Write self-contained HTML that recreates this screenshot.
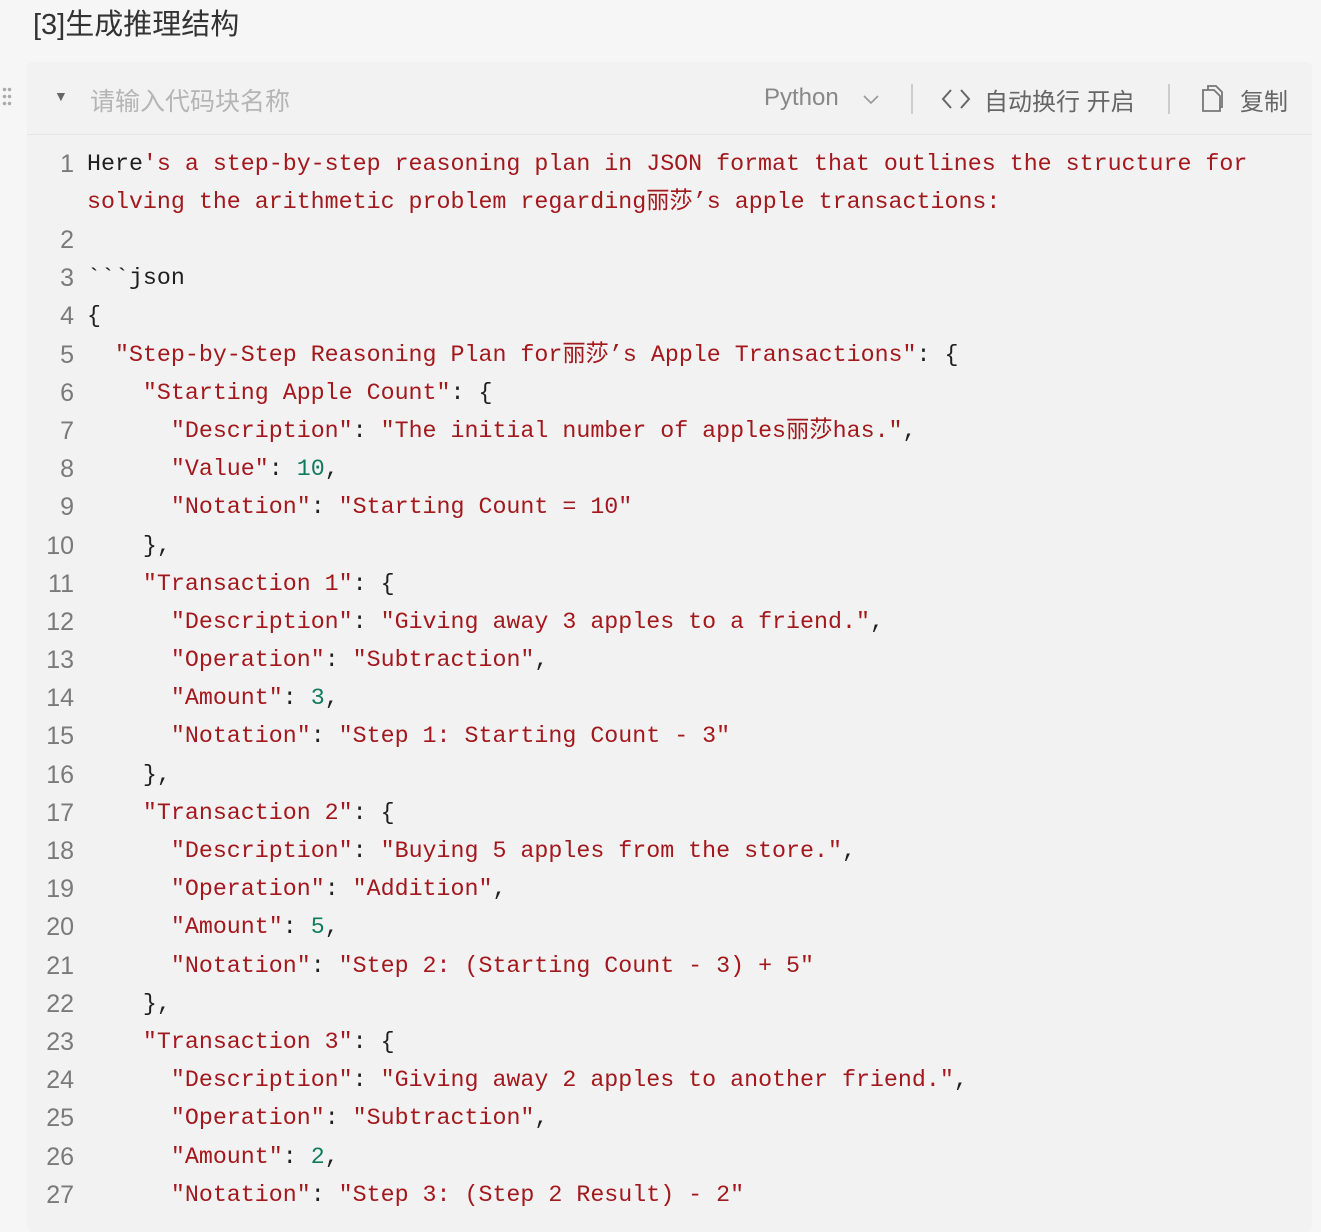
<!DOCTYPE html>
<html><head><meta charset="utf-8"><style>
html,body{margin:0;padding:0;width:1321px;height:1216px;overflow:hidden;background:#f6f6f6;font-family:"Liberation Sans","Noto Sans CJK SC",sans-serif;}
.title{position:absolute;left:33px;top:1px;font-size:29px;color:#333;}
.block{position:absolute;left:27px;top:62px;width:1285px;height:1170px;background:#f2f2f3;border-radius:6px;}
.tb{position:absolute;left:0;top:0;width:100%;height:72px;border-bottom:1px solid #e6e6e6;color:#888;font-size:24px;}
.tb span{position:absolute;top:22px;}
.sep{position:absolute;top:22px;width:2px;height:30px;background:#ccc;}
.r{position:absolute;left:0;width:1300px;height:38px;}
.ln{position:absolute;width:74px;text-align:right;left:0;top:-2px;line-height:38px;color:#7a7a7a;font-size:25px;font-family:"Liberation Sans",sans-serif;}
.cd{position:absolute;left:87px;top:-2px;line-height:38px;font-family:"Liberation Mono","Noto Sans CJK SC",monospace;font-size:23.3px;color:#1f1f1f;white-space:pre;}
.s{color:#a3181c}.n{color:#127a5c}
.dots{position:absolute;left:2px;top:86px;width:10px;height:22px;background:radial-gradient(circle,#aaa 1.5px,transparent 2px) 0 0/5px 7px;}
</style></head><body>
<div class="title">[3]生成推理结构</div>
<div class="dots"></div>
<div class="block">
<div class="tb">
<span style="left:27px;top:26px;font-size:14px;color:#666">▼</span>
<span style="left:63px;top:20px;font-size:25px;color:#b5b5b5">请输入代码块名称</span>
<span style="left:737px;top:22px;color:#888">Python</span>
<svg style="position:absolute;left:835px;top:32px" width="18" height="12"><path d="M2 2 L9 9 L16 2" stroke="#999" stroke-width="1.6" fill="none"/></svg>
<div class="sep" style="left:884px"></div>
<svg style="position:absolute;left:912px;top:24px" width="34" height="26"><path d="M12 4 L4 13 L12 22 M22 4 L30 13 L22 22" stroke="#666" stroke-width="2" fill="none"/></svg>
<span style="left:957px;top:20px;color:#666">自动换行 开启</span>
<div class="sep" style="left:1141px"></div>
<svg style="position:absolute;left:1172px;top:22px" width="26" height="30"><path d="M4 6 H15 L21 12 V27 H4 Z M9 6 V2 H17 L23 8 V23 H21" stroke="#777" stroke-width="1.8" fill="none"/></svg>
<span style="left:1213px;top:20px;color:#666">复制</span>
</div>
</div>

<div class="r" style="top:147px"><div class="ln">1</div><div class="cd">Here<span class="s">'s a step-by-step reasoning plan in JSON format that outlines the structure for</span></div></div>
<div class="r" style="top:185px"><div class="cd"><span class="s">solving the arithmetic problem regarding丽莎’s apple transactions:</span></div></div>
<div class="r" style="top:223px"><div class="ln">2</div></div>
<div class="r" style="top:261px"><div class="ln">3</div><div class="cd">&#96;&#96;&#96;json</div></div>
<div class="r" style="top:299px"><div class="ln">4</div><div class="cd">{</div></div>
<div class="r" style="top:338px"><div class="ln">5</div><div class="cd">  <span class="s">"Step-by-Step Reasoning Plan for丽莎’s Apple Transactions"</span>: {</div></div>
<div class="r" style="top:376px"><div class="ln">6</div><div class="cd">    <span class="s">"Starting Apple Count"</span>: {</div></div>
<div class="r" style="top:414px"><div class="ln">7</div><div class="cd">      <span class="s">"Description"</span>: <span class="s">"The initial number of apples丽莎has."</span>,</div></div>
<div class="r" style="top:452px"><div class="ln">8</div><div class="cd">      <span class="s">"Value"</span>: <span class="n">10</span>,</div></div>
<div class="r" style="top:490px"><div class="ln">9</div><div class="cd">      <span class="s">"Notation"</span>: <span class="s">"Starting Count = 10"</span></div></div>
<div class="r" style="top:529px"><div class="ln">10</div><div class="cd">    },</div></div>
<div class="r" style="top:567px"><div class="ln">11</div><div class="cd">    <span class="s">"Transaction 1"</span>: {</div></div>
<div class="r" style="top:605px"><div class="ln">12</div><div class="cd">      <span class="s">"Description"</span>: <span class="s">"Giving away 3 apples to a friend."</span>,</div></div>
<div class="r" style="top:643px"><div class="ln">13</div><div class="cd">      <span class="s">"Operation"</span>: <span class="s">"Subtraction"</span>,</div></div>
<div class="r" style="top:681px"><div class="ln">14</div><div class="cd">      <span class="s">"Amount"</span>: <span class="n">3</span>,</div></div>
<div class="r" style="top:719px"><div class="ln">15</div><div class="cd">      <span class="s">"Notation"</span>: <span class="s">"Step 1: Starting Count - 3"</span></div></div>
<div class="r" style="top:758px"><div class="ln">16</div><div class="cd">    },</div></div>
<div class="r" style="top:796px"><div class="ln">17</div><div class="cd">    <span class="s">"Transaction 2"</span>: {</div></div>
<div class="r" style="top:834px"><div class="ln">18</div><div class="cd">      <span class="s">"Description"</span>: <span class="s">"Buying 5 apples from the store."</span>,</div></div>
<div class="r" style="top:872px"><div class="ln">19</div><div class="cd">      <span class="s">"Operation"</span>: <span class="s">"Addition"</span>,</div></div>
<div class="r" style="top:910px"><div class="ln">20</div><div class="cd">      <span class="s">"Amount"</span>: <span class="n">5</span>,</div></div>
<div class="r" style="top:949px"><div class="ln">21</div><div class="cd">      <span class="s">"Notation"</span>: <span class="s">"Step 2: (Starting Count - 3) + 5"</span></div></div>
<div class="r" style="top:987px"><div class="ln">22</div><div class="cd">    },</div></div>
<div class="r" style="top:1025px"><div class="ln">23</div><div class="cd">    <span class="s">"Transaction 3"</span>: {</div></div>
<div class="r" style="top:1063px"><div class="ln">24</div><div class="cd">      <span class="s">"Description"</span>: <span class="s">"Giving away 2 apples to another friend."</span>,</div></div>
<div class="r" style="top:1101px"><div class="ln">25</div><div class="cd">      <span class="s">"Operation"</span>: <span class="s">"Subtraction"</span>,</div></div>
<div class="r" style="top:1140px"><div class="ln">26</div><div class="cd">      <span class="s">"Amount"</span>: <span class="n">2</span>,</div></div>
<div class="r" style="top:1178px"><div class="ln">27</div><div class="cd">      <span class="s">"Notation"</span>: <span class="s">"Step 3: (Step 2 Result) - 2"</span></div></div>
</body></html>
